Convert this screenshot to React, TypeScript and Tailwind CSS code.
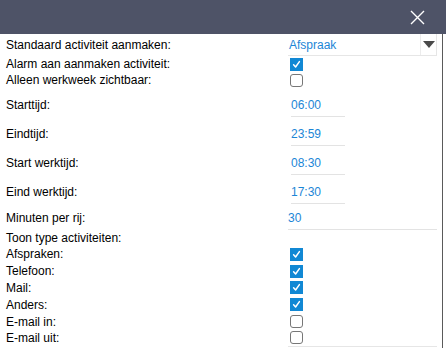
import type { ReactNode } from 'react';

const LABEL = 'w-[282px] shrink-0 text-[12px] text-black';

function Checkbox({ checked }: { checked: boolean }) {
  if (!checked) {
    return <div className="h-[13px] w-[13px] rounded-[3px] border border-[#777] bg-white" />;
  }
  return (
    <div className="flex h-[13px] w-[13px] items-center justify-center bg-[#1188d4]">
      <svg width="9" height="9" viewBox="0 0 9 9" fill="none">
        <path d="M1.6 4.8 L3.6 7 L7.4 1.6" stroke="white" strokeWidth="1.5" strokeLinecap="round" strokeLinejoin="round" />
      </svg>
    </div>
  );
}

function CheckRow({ label, checked, height, last }: { label: string; checked: boolean; height: string; last?: boolean }) {
  return (
    <div className={`flex items-center ${height}`}>
      <div className={LABEL}>{label}</div>
      <div className={`flex h-full w-[149px] items-center pl-[2px] ${last ? 'border-b border-[#e6e6e6]' : ''}`}>
        <Checkbox checked={checked} />
      </div>
    </div>
  );
}

function TimeRow({ label, value }: { label: string; value: string }) {
  return (
    <div className="flex h-[29px] items-end">
      <div className={`${LABEL} flex h-[24px] items-center`}>{label}</div>
      <div className="ml-[3px] flex h-[24px] w-[54px] items-center border-b border-[#e3e3e3] text-[12px] text-[#1c86d6]">
        {value}
      </div>
    </div>
  );
}

function Row({ children }: { children: ReactNode }) {
  return <div className="flex">{children}</div>;
}

export default function App() {
  return (
    <div className="h-[348px] w-[446px] overflow-hidden bg-white font-['Liberation_Sans',Arial,sans-serif]">
      <div className="flex h-[34px] items-center justify-end bg-[#4e5367] pr-[21px]">
        <svg width="15" height="15" viewBox="0 0 15 15" fill="none">
          <path d="M1 1 L14 14 M14 1 L1 14" stroke="white" strokeWidth="1.4" />
        </svg>
      </div>
      <div className="h-[314px] w-[443px] border-r border-[#5a5a5a] pl-[6px]">
        <Row>
          <div className={`${LABEL} flex h-[22px] items-center`}>Standaard activiteit aanmaken:</div>
          <div className="flex h-[22px] w-[149px] border-b border-r border-[#e6e6e6]">
            <div className="flex flex-1 items-center pl-[1px] text-[12px] text-[#1c86d6]">Afspraak</div>
            <div className="flex w-[16px] items-center justify-center border-l border-[#ececec]">
              <svg width="12" height="7" viewBox="0 0 12 7">
                <path d="M0 0 H12 L6 7 Z" fill="#4a4a4a" />
              </svg>
            </div>
          </div>
        </Row>
        <CheckRow label="Alarm aan aanmaken activiteit:" checked height="h-[16px]" />
        <CheckRow label="Alleen werkweek zichtbaar:" checked={false} height="h-[16px]" />
        <TimeRow label="Starttijd:" value="06:00" />
        <TimeRow label="Eindtijd:" value="23:59" />
        <TimeRow label="Start werktijd:" value="08:30" />
        <TimeRow label="Eind werktijd:" value="17:30" />
        <div className="flex h-[26px] items-end">
          <div className={`${LABEL} flex h-[24px] items-center`}>Minuten per rij:</div>
          <div className="flex h-[24px] w-[149px] items-center border-b border-[#e3e3e3] text-[12px] text-[#1c86d6]">30</div>
        </div>
        <div className="flex h-[16px] items-center text-[12px] text-black">Toon type activiteiten:</div>
        <CheckRow label="Afspraken:" checked height="h-[16.8px]" />
        <CheckRow label="Telefoon:" checked height="h-[16.8px]" />
        <CheckRow label="Mail:" checked height="h-[16.8px]" />
        <CheckRow label="Anders:" checked height="h-[16.8px]" />
        <CheckRow label="E-mail in:" checked={false} height="h-[16.8px]" />
        <CheckRow label="E-mail uit:" checked={false} height="h-[16.8px]" last />
      </div>
    </div>
  );
}
